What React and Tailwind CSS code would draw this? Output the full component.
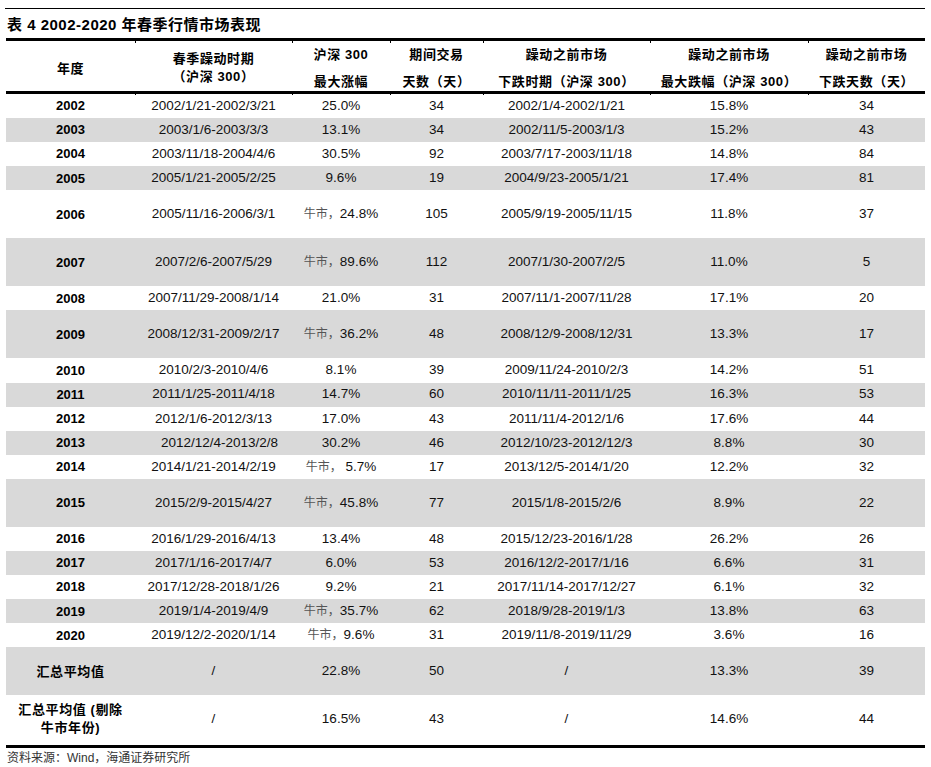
import React from "react";

const FONT = { fontFamily: '"Liberation Sans", Arial, "Noto Sans CJK SC", sans-serif' };
const CJK = { fontFamily: '"Noto Sans CJK SC", "Liberation Sans", sans-serif' };
const COLS = "grid grid-cols-[129px_157px_98px_93px_167px_158px_117px]";

const rows = [
  ["2002", "2002/1/21-2002/3/21", "25.0%", "34", "2002/1/4-2002/1/21", "15.8%", "34"],
  ["2003", "2003/1/6-2003/3/3", "13.1%", "34", "2002/11/5-2003/1/3", "15.2%", "43"],
  ["2004", "2003/11/18-2004/4/6", "30.5%", "92", "2003/7/17-2003/11/18", "14.8%", "84"],
  ["2005", "2005/1/21-2005/2/25", "9.6%", "19", "2004/9/23-2005/1/21", "17.4%", "81"],
  ["2006", "2005/11/16-2006/3/1", "24.8%", "105", "2005/9/19-2005/11/15", "11.8%", "37", true, true],
  ["2007", "2007/2/6-2007/5/29", "89.6%", "112", "2007/1/30-2007/2/5", "11.0%", "5", true, true],
  ["2008", "2007/11/29-2008/1/14", "21.0%", "31", "2007/11/1-2007/11/28", "17.1%", "20"],
  ["2009", "2008/12/31-2009/2/17", "36.2%", "48", "2008/12/9-2008/12/31", "13.3%", "17", true, true],
  ["2010", "2010/2/3-2010/4/6", "8.1%", "39", "2009/11/24-2010/2/3", "14.2%", "51"],
  ["2011", "2011/1/25-2011/4/18", "14.7%", "60", "2010/11/11-2011/1/25", "16.3%", "53"],
  ["2012", "2012/1/6-2012/3/13", "17.0%", "43", "2011/11/4-2012/1/6", "17.6%", "44"],
  ["2013", "2012/12/4-2013/2/8", "30.2%", "46", "2012/10/23-2012/12/3", "8.8%", "30"],
  ["2014", "2014/1/21-2014/2/19", "\u00a05.7%", "17", "2013/12/5-2014/1/20", "12.2%", "32", false, true],
  ["2015", "2015/2/9-2015/4/27", "45.8%", "77", "2015/1/8-2015/2/6", "8.9%", "22", true, true],
  ["2016", "2016/1/29-2016/4/13", "13.4%", "48", "2015/12/23-2016/1/28", "26.2%", "26"],
  ["2017", "2017/1/16-2017/4/7", "6.0%", "53", "2016/12/2-2017/1/16", "6.6%", "31"],
  ["2018", "2017/12/28-2018/1/26", "9.2%", "21", "2017/11/14-2017/12/27", "6.1%", "32"],
  ["2019", "2019/1/4-2019/4/9", "35.7%", "62", "2018/9/28-2019/1/3", "13.8%", "63", false, true],
  ["2020", "2019/12/2-2020/1/14", "9.6%", "31", "2019/11/8-2019/11/29", "3.6%", "16", false, true],
];

function HeadCell({ children, tick = true, tight = false }) {
  return (
    <div
      className={
        "relative flex flex-col items-center justify-center font-bold text-[13px] tracking-[0.6px] text-black " +
        (tight ? "leading-[18px]" : "leading-[27px]") +
        (tick
          ? " before:absolute before:left-0 before:top-0 before:h-[2px] before:w-px before:bg-black after:absolute after:left-0 after:bottom-0 after:h-[2px] after:w-px after:bg-black"
          : "")
      }
    >
      {children}
    </div>
  );
}

function Bull({ v }) {
  return (
    <span>
      <span style={CJK} className="text-[12px] text-[#555]">牛市，</span>
      {v}
    </span>
  );
}

export default function App() {
  return (
    <div style={FONT} className="bg-white w-[931px] h-[767px] text-black">
      <div className="ml-[5px] w-[920px] pt-[8px]">
        <div className="border-t border-black h-[30px] flex items-center pt-[3px] pl-[2px] font-bold text-[15px] tracking-[0.5px]">
          表 4 2002-2020 年春季行情市场表现
        </div>
        <div className="ml-[1px] w-[919px]">
          <div className={COLS + " h-[56px] border-t-[3px] border-b-[3px] border-black"}>
            <HeadCell tick={false}><span>年度</span></HeadCell>
            <HeadCell tight><span>春季躁动时期</span><span>（沪深 300）</span></HeadCell>
            <HeadCell><span>沪深 300</span><span>最大涨幅</span></HeadCell>
            <HeadCell><span>期间交易</span><span>天数（天）</span></HeadCell>
            <HeadCell><span>躁动之前市场</span><span>下跌时期（沪深 300）</span></HeadCell>
            <HeadCell><span>躁动之前市场</span><span>最大跌幅（沪深 300）</span></HeadCell>
            <HeadCell><span>躁动之前市场</span><span>下跌天数（天）</span></HeadCell>
          </div>
          {rows.map((r, i) => {
            const [y, p, g, d, p2, f, d2, tall, bull] = r;
            return (
              <div
                key={y}
                className={
                  COLS +
                  " items-center text-center text-[13.5px] text-[#111] " +
                  (tall ? "h-[48px] " : "h-[24.1px] ") +
                  (i % 2 === 1 ? "bg-[#d9d9d9]" : "bg-white")
                }
              >
                <div className="font-bold text-[13px] text-black">{y}</div>
                <div className={y === "2013" ? "pl-[12px]" : ""}>{p}</div>
                <div>{bull ? <Bull v={g} /> : g}</div>
                <div>{d}</div>
                <div>{p2}</div>
                <div>{f}</div>
                <div>{d2}</div>
              </div>
            );
          })}
          <div className={COLS + " items-center text-center text-[13.5px] text-[#111] h-[48px] bg-[#d9d9d9]"}>
            <div className="font-bold text-[13px] tracking-[0.6px] text-black">汇总平均值</div>
            <div>/</div>
            <div>22.8%</div>
            <div>50</div>
            <div>/</div>
            <div>13.3%</div>
            <div>39</div>
          </div>
          <div className={COLS + " items-center text-center text-[13.5px] text-[#111] h-[53px] pb-[3px] bg-white border-b-[3px] border-black"}>
            <div className="font-bold text-[13px] tracking-[0.6px] leading-[18px] text-black flex flex-col items-center">
              <span>汇总平均值 (剔除</span>
              <span>牛市年份)</span>
            </div>
            <div>/</div>
            <div>16.5%</div>
            <div>43</div>
            <div>/</div>
            <div>14.6%</div>
            <div>44</div>
          </div>
          <div style={CJK} className="pl-[1px] pt-[1px] text-[12px] leading-[16px] text-[#333]">
            资料来源：<span style={FONT}>Wind</span>，海通证券研究所
          </div>
        </div>
      </div>
    </div>
  );
}
